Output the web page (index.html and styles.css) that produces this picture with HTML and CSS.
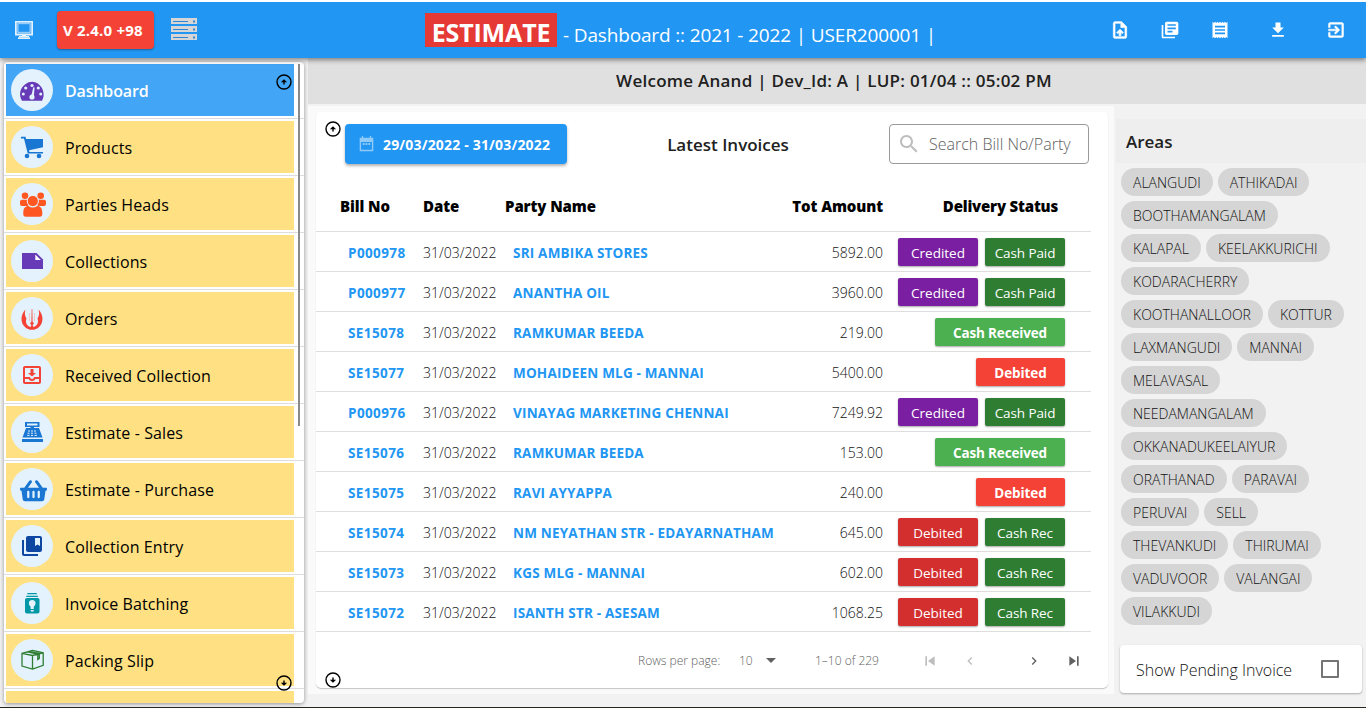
FILE: index.html
```html
<!DOCTYPE html>
<html lang="en">
<head>
<meta charset="utf-8">
<title>Estimate - Dashboard</title>
<link rel="stylesheet" href="styles.css">
</head>
<body>
<header class="topbar">
  <svg class="monitor" viewBox="0 0 18 18"><path d="M.8.8h16.400v12.800H.8z" fill="#64b5f6" stroke="#e3f2fd" stroke-width="1.600"/><path d="M3 2.700h12v8.600H3z" fill="#2196f3" stroke="#bbdefb" stroke-width=".8"/><path d="M7 13h4v2.500H7zM4 15h10v1H4zM3 16.300h12V18H3z" fill="#e3f2fd"/></svg>
  <span class="version">V 2.4.0 +98</span>
  <svg class="server" viewBox="0 0 26 22"><path d="M0 0h26v6H0zM0 8h26v6H0zM0 16h26v6H0z" fill="#d6d6d6"/><path d="M2 3.500h15M2 11.500h15M2 19.500h15" stroke="#2f86d0" stroke-width="1"/><path d="M22 2.500h2v2h-2zM22 10.500h2v2h-2zM22 18.500h2v2h-2z" fill="#2f86d0"/></svg>
  <h1 class="title"><span class="brand">ESTIMATE</span><span class="subtitle">- Dashboard :: 2021 - 2022 | USER200001 |</span></h1>
  <nav class="actions">
    <svg viewBox="0 0 24 24"><path d="M14 2H6c-1.100 0-1.990.9-1.990 2L4 20c0 1.100.89 2 1.990 2H18c1.100 0 2-.9 2-2V8l-6-6zm4 18H6V4h7v5h5v11zM8 15.010l1.410 1.410L11 14.840V19h2v-4.160l1.590 1.590L16 15.010 12.010 11z" stroke="#fff" stroke-width=".8"/></svg>
    <svg viewBox="0 0 24 24"><path d="M4 6H2v14c0 1.100.9 2 2 2h14v-2H4V6zm16-4H8c-1.100 0-2 .9-2 2v12c0 1.100.9 2 2 2h12c1.100 0 2-.9 2-2V4c0-1.100-.9-2-2-2zm-1 9H9V9h10v2zm-4 4H9v-2h6v2zm4-8H9V5h10v2z"/></svg>
    <svg viewBox="0 0 24 24"><path d="M18 17H6v-2h12v2zm0-4H6v-2h12v2zm0-4H6V7h12v2zM3 22l1.500-1.500L6 22l1.500-1.500L9 22l1.500-1.500L12 22l1.500-1.500L15 22l1.500-1.500L18 22l1.500-1.500L21 22V2l-1.500 1.500L18 2l-1.500 1.500L15 2l-1.500 1.500L12 2l-1.500 1.500L9 2 7.500 3.500 6 2 4.500 3.500 3 2v20z"/></svg>
    <svg class="spread" viewBox="0 0 24 24"><path d="M19 9h-4V3H9v6H5l7 7 7-7zM5 18v2h14v-2H5z"/></svg>
    <svg class="spread" viewBox="0 0 24 24"><path d="M10.090 15.590L11.500 17l5-5-5-5-1.410 1.410L12.670 11H3v2h9.670l-2.580 2.590zM19 3H5c-1.110 0-2 .9-2 2v4h2V5h14v14H5v-4H3v4c0 1.100.89 2 2 2h14c1.100 0 2-.9 2-2V5c0-1.100-.9-2-2-2z" stroke="#fff" stroke-width=".6"/></svg>
  </nav>
</header>

<div class="layout">
  <aside class="sidebar">
    <ul class="menu">
      <li class="item active"><a><svg class="ico" viewBox="0 0 42 42"><path d="M11 31.700C7.500 26 9 19 14 15.400s10-3.200 14 0S34.500 26 31 31.700z" fill="#673ab7"/><g fill="#e3f2fd"><circle cx="12.300" cy="25" r="1.500"/><circle cx="14.700" cy="19" r="1.600"/><circle cx="21" cy="16.500" r="1.600"/><circle cx="27.300" cy="19" r="1.600"/><circle cx="29.700" cy="25" r="1.500"/><circle cx="21" cy="28" r="2.600"/><path d="M22.300 18.300l1.300.3-.8 9.400-2.600-.8z"/></g></svg><span>Dashboard</span></a></li>
      <li class="item"><a><svg class="ico" viewBox="0 0 42 42"><g fill="#1976d2"><path d="M10 10.700h4.500l.6 2.300H32v8.300l-14 3 .4 1.700H32v1.600H16.700L13 12.500h-3z"/><circle cx="16" cy="30" r="2.300"/><circle cx="28" cy="30" r="2.300"/></g></svg><span>Products</span></a></li>
      <li class="item"><a><svg class="ico" viewBox="0 0 42 42"><g fill="#ff5722"><circle cx="14" cy="12.700" r="3.300"/><circle cx="29.700" cy="12.700" r="3.300"/><rect x="9" y="16.700" width="9" height="6.300" rx="2"/><rect x="26" y="16.700" width="9" height="6.300" rx="2"/><circle cx="21.800" cy="18" r="5.600" stroke="#e3f2fd"/><path d="M12.300 30c0-5 2-7 5-7 3 2 6 2 9 0 3 0 5 2 5 7v1.200c0 1.600-.8 2.500-2.500 2.500H14.800c-1.700 0-2.500-.9-2.500-2.500z"/></g></svg><span>Parties Heads</span></a></li>
      <li class="item"><a><svg class="ico" viewBox="0 0 42 42"><path d="M11 13h14.500l6.500 6.500V29H11z" fill="#673ab7"/><path d="M24.300 14.500l5.500 5.500h-5.500z" fill="#fff"/></svg><span>Collections</span></a></li>
      <li class="item"><a><svg class="ico" viewBox="0 0 42 42"><path d="M14.500 12.500c-5 5-5.300 13-.8 17.200 4 4.200 10.600 4.200 14.600 0 4.500-4.200 4.200-12.200-.8-17.200 1.200 4 .6 6.500-1 9 1.500 4-.4 7.500-4 8.400l-.9-1.600 1.400-2.200-1.400-1-.3-13h-.6l-.3 13-1.400 1 1.400 2.200-.9 1.600c-3.600-.9-5.500-4.400-4-8.400-1.600-2.500-2.200-5-1-9z" fill="#f44336"/><path d="M18.500 16v8M23.500 16v8" stroke="#f6a9a5" stroke-width=".6"/></svg><span>Orders</span></a></li>
      <li class="item"><a><svg class="ico" viewBox="-9 -9 42 42"><path d="M19 3H5c-1.100 0-2 .9-2 2v14c0 1.100.9 2 2 2h14c1.100 0 2-.9 2-2V5c0-1.100-.9-2-2-2zm0 16H5v-3h3.560c.69 1.190 1.970 2 3.450 2s2.750-.81 3.450-2H19v3zm0-5h-4.990c0 1.100-.9 2-2 2s-2-.9-2-2H5V5h14v9zm-3-4h-2.500V6h-3v4H8l4 3.500z" fill="#f44336"/></svg><span>Received Collection</span></a></li>
      <li class="item"><a><svg class="ico" viewBox="0 0 42 42"><path d="M14 11h14.500v5H23v1h5l3.500 9.500h-20L15 17h4.500v-1H14zm2 1.600v1.800h10.500v-1.800zM11 28h21v3H11z" fill="#1976d2" fill-rule="evenodd"/><path d="M17 20h2m1 0h2m1 0h2M16.500 22.200h2m1.500 0h2m1.500 0h2M16.200 24.400h2.300m1.500 0h2m1.500 0h2.300" stroke="#e3f2fd" stroke-width="1"/></svg><span>Estimate - Sales</span></a></li>
      <li class="item"><a><svg class="ico" viewBox="0 0 42 42"><path transform="translate(9 10.700) scale(.0469)" d="M576 216v16c0 13.255-10.745 24-24 24h-8l-26.113 182.788C514.509 462.435 494.257 480 470.370 480H105.630c-23.887 0-44.139-17.565-47.518-41.212L32 256h-8c-13.255 0-24-10.745-24-24v-16c0-13.255 10.745-24 24-24h67.341l106.780-146.821c10.395-14.292 30.407-17.453 44.701-7.058 14.293 10.395 17.453 30.408 7.058 44.701L170.477 192h235.046L326.120 82.821c-10.395-14.292-7.234-34.306 7.059-44.701 14.291-10.395 34.306-7.235 44.701 7.058L484.659 192H552c13.255 0 24 10.745 24 24zM312 392V280c0-13.255-10.745-24-24-24s-24 10.745-24 24v112c0 13.255 10.745 24 24 24s24-10.745 24-24zm112 0V280c0-13.255-10.745-24-24-24s-24 10.745-24 24v112c0 13.255 10.745 24 24 24s24-10.745 24-24zm-224 0V280c0-13.255-10.745-24-24-24s-24 10.745-24 24v112c0 13.255 10.745 24 24 24s24-10.745 24-24z" fill="#1976d2"/></svg><span>Estimate - Purchase</span></a></li>
      <li class="item"><a><svg class="ico" viewBox="-9 -9 42 42"><path d="M4 6H2v14c0 1.100.9 2 2 2h14v-2H4V6zm16-4H8c-1.100 0-2 .9-2 2v12c0 1.100.9 2 2 2h12c1.100 0 2-.9 2-2V4c0-1.100-.9-2-2-2zm0 10l-2.500-1.500L15 12V4h5v8z" fill="#0d47a1"/></svg><span>Collection Entry</span></a></li>
      <li class="item"><a><svg class="ico" viewBox="0 0 42 42"><path d="M16.300 11h9.500v1.200h-9.500zM15.300 13.700h11.500v1.200H15.300zM16 16h10.500c1.200 0 2 .8 2 2v11.500c0 1.200-.8 2-2 2H16c-1.200 0-2-.8-2-2V18c0-1.200.8-2 2-2z" fill="#0097a7"/><path d="M21.200 18c4 0 4.300 4.500 1.600 6.800V27h-3.200v-2.200C17 22.500 17.200 18 21.200 18zM19.700 28h3v1.500h-3z" fill="#e3f2fd"/></svg><span>Invoice Batching</span></a></li>
      <li class="item"><a><svg class="ico" viewBox="0 0 42 42"><path d="M11 14.300l10.500-3 10.700 2.500v12.500l-10.700 3.800L11 27zM11 14.300l10.500 2.200 10.700-2.700M21.500 16.500v13.600M16.500 12.800l10.300 2.400v5.300l1.500-1v-4.900L18.200 12.400" fill="none" stroke="#2e7d32" stroke-width="1.300"/></svg><span>Packing Slip</span></a></li>
      <li class="item"><a></a></li>
    </ul>
    <span class="thumb"></span>
    <svg class="hint hint-up" viewBox="0 0 16 16"><circle cx="8" cy="8" r="7"/><path d="M8 10.500V6M6.600 7.600L8 6.200l1.400 1.400z"/></svg>
    <svg class="hint hint-down" viewBox="0 0 16 16"><circle cx="8" cy="8" r="7"/><path d="M8 5.500V10M6.600 8.400L8 9.800l1.400-1.400z"/></svg>
  </aside>

  <div class="content">
    <div class="welcome">Welcome Anand | Dev_Id: A | LUP: 01/04 :: 05:02 PM</div>
    <div class="columns">
      <main class="main">
        <section class="card">
          <svg class="hint card-up" viewBox="0 0 16 16"><circle cx="8" cy="8" r="7"/><path d="M8 10.500V6M6.600 7.600L8 6.200l1.400 1.400z"/></svg>
          <svg class="hint card-down" viewBox="0 0 16 16"><circle cx="8" cy="8" r="7"/><path d="M8 5.500V10M6.600 8.400L8 9.800l1.400-1.400z"/></svg>
          <div class="toolbar">
            <button class="range"><svg viewBox="0 0 16 17"><path d="M1.500 2.500h13v13h-13zM1 5.500h14" fill="none" stroke="#90caf9" stroke-width="1.500"/><path d="M1 2h14v4H1zM3 0h1.500v3H3zM11.500 0H13v3h-1.500zM4 7.500h2v2H4zM7 7.500h2v2H7zM10 7.500h2v2h-2z" fill="#90caf9"/></svg>29/03/2022 - 31/03/2022</button>
            <h2 class="heading">Latest Invoices</h2>
            <label class="search"><svg viewBox="0 0 24 24"><path d="M15.500 14h-.79l-.28-.27C15.410 12.590 16 11.110 16 9.500 16 5.910 13.090 3 9.500 3S3 5.910 3 9.500 5.910 16 9.500 16c1.610 0 3.090-.59 4.230-1.570l.27.28v.79l5 4.990L20.490 19l-4.990-5zm-6 0C7.010 14 5 11.990 5 9.500S7.010 5 9.500 5 14 7.010 14 9.500 11.990 14 9.500 14z"/></svg><span>Search Bill No/Party</span></label>
          </div>
          <div class="table">
            <div class="row head"><b>Bill No</b><b>Date</b><b>Party Name</b><b class="num">Tot Amount</b><b class="status">Delivery Status</b></div>
            <div class="row"><a class="bill">P000978</a><span class="date">31/03/2022</span><a class="party">SRI AMBIKA STORES</a><span class="num">5892.00</span><span class="status"><i class="tag purple">Credited</i><i class="tag green">Cash Paid</i></span></div>
            <div class="row"><a class="bill">P000977</a><span class="date">31/03/2022</span><a class="party">ANANTHA OIL</a><span class="num">3960.00</span><span class="status"><i class="tag purple">Credited</i><i class="tag green">Cash Paid</i></span></div>
            <div class="row"><a class="bill">SE15078</a><span class="date">31/03/2022</span><a class="party">RAMKUMAR BEEDA</a><span class="num">219.00</span><span class="status"><i class="tag received">Cash Received</i></span></div>
            <div class="row"><a class="bill">SE15077</a><span class="date">31/03/2022</span><a class="party">MOHAIDEEN MLG - MANNAI</a><span class="num">5400.00</span><span class="status"><i class="tag debited">Debited</i></span></div>
            <div class="row"><a class="bill">P000976</a><span class="date">31/03/2022</span><a class="party">VINAYAG MARKETING CHENNAI</a><span class="num">7249.92</span><span class="status"><i class="tag purple">Credited</i><i class="tag green">Cash Paid</i></span></div>
            <div class="row"><a class="bill">SE15076</a><span class="date">31/03/2022</span><a class="party">RAMKUMAR BEEDA</a><span class="num">153.00</span><span class="status"><i class="tag received">Cash Received</i></span></div>
            <div class="row"><a class="bill">SE15075</a><span class="date">31/03/2022</span><a class="party">RAVI AYYAPPA</a><span class="num">240.00</span><span class="status"><i class="tag debited">Debited</i></span></div>
            <div class="row"><a class="bill">SE15074</a><span class="date">31/03/2022</span><a class="party">NM NEYATHAN STR - EDAYARNATHAM</a><span class="num">645.00</span><span class="status"><i class="tag red">Debited</i><i class="tag green">Cash Rec</i></span></div>
            <div class="row"><a class="bill">SE15073</a><span class="date">31/03/2022</span><a class="party">KGS MLG - MANNAI</a><span class="num">602.00</span><span class="status"><i class="tag red">Debited</i><i class="tag green">Cash Rec</i></span></div>
            <div class="row"><a class="bill">SE15072</a><span class="date">31/03/2022</span><a class="party">ISANTH STR - ASESAM</a><span class="num">1068.25</span><span class="status"><i class="tag red">Debited</i><i class="tag green">Cash Rec</i></span></div>
          </div>
          <footer class="pager">
            <span class="per-page">Rows per page:</span><span class="size">10</span>
            <svg class="caret" viewBox="0 0 10 5"><path d="M0 0h10L5 5z"/></svg>
            <span class="count">1–10 of 229</span>
            <svg class="pg off first" viewBox="0 0 24 24"><path d="M5 5h2.500v14H5zM19 5v14l-10-7z"/></svg>
            <svg class="pg off prev" viewBox="0 0 24 24"><path d="M15.410 7.410L14 6l-6 6 6 6 1.410-1.410L10.830 12z"/></svg>
            <svg class="pg next" viewBox="0 0 24 24"><path d="M10 6L8.590 7.410 13.170 12l-4.580 4.590L10 18l6-6z"/></svg>
            <svg class="pg last" viewBox="0 0 24 24"><path d="M16.500 5H19v14h-2.500zM5 5v14l10-7z"/></svg>
          </footer>
        </section>
      </main>
      <aside class="areas">
        <h2 class="areas-title">Areas</h2>
        <div class="chips"><span>ALANGUDI</span><span>ATHIKADAI</span><span>BOOTHAMANGALAM</span><span>KALAPAL</span><span>KEELAKKURICHI</span><span>KODARACHERRY</span><span>KOOTHANALLOOR</span><span>KOTTUR</span><span>LAXMANGUDI</span><span>MANNAI</span><span>MELAVASAL</span><span>NEEDAMANGALAM</span><span>OKKANADUKEELAIYUR</span><span>ORATHANAD</span><span>PARAVAI</span><span>PERUVAI</span><span>SELL</span><span>THEVANKUDI</span><span>THIRUMAI</span><span>VADUVOOR</span><span>VALANGAI</span><span>VILAKKUDI</span></div>
        <label class="pending">Show Pending Invoice<span class="box"></span></label>
      </aside>
    </div>
  </div>
</div>
</body>
</html>
```
FILE: styles.css
```css
* { box-sizing: border-box; }
body { margin: 0; width: 1366px; height: 708px; overflow: hidden; background: #f2f2f2; border-top: 2px solid #fff; border-bottom: 1px solid #26261f; font-family: "Open Sans", "Noto Sans", sans-serif; color: #212121; display: flex; flex-direction: column; }
h1, h2 { margin: 0; }
svg { display: block; flex: none; }

.topbar { position: relative; z-index: 2; height: 56px; flex: none; background: #2196f3; box-shadow: 0 2px 5px rgba(0,0,0,.45); display: flex; align-items: center; padding: 0 20px 0 15px; }
.monitor { width: 18px; height: 18px; }
.version { width: 97px; height: 38px; margin-left: 24px; padding-left: 6px; border-radius: 4px; background: #f44336; color: #fff; font-size: 15px; font-weight: 700; line-height: 39px; letter-spacing: .2px; white-space: nowrap; box-shadow: 0 1px 2px rgba(0,0,0,.35); }
.server { width: 26px; height: 22px; margin-left: 17px; margin-top: -2px; }
.title { margin-left: 228px; width: 520px; display: flex; align-items: baseline; color: #fff; white-space: nowrap; font-weight: 400; }
.brand { width: 132px; height: 34px; background: #e53935; text-align: center; font-size: 25px; font-weight: 700; line-height: 38px; letter-spacing: -.15px; }
.subtitle { margin-left: 6px; font-size: 19px; letter-spacing: -.15px; }
.actions { margin-left: auto; display: flex; gap: 30px; }
.actions svg { width: 20px; height: 20px; fill: #fff; }
.actions .spread { margin-left: 8px; }

.layout { flex: 1; min-height: 0; display: flex; }
.sidebar { position: relative; width: 300px; height: 641px; margin: 4px 4px 0; padding: 2px 0 0; background: #fff; border-radius: 4px; box-shadow: 0 1px 4px rgba(0,0,0,.4); overflow: hidden; flex: none; }
.menu { list-style: none; margin: 0; padding: 0; }
.item { height: 57px; padding-left: 2px; padding-right: 10px; background: linear-gradient(#ddd, #ddd) 0 54px / 100% 1px no-repeat; }
.item a { display: flex; align-items: center; gap: 12px; height: 52px; padding-left: 5px; background: #ffe082; color: #000; font-size: 16px; font-weight: 500; line-height: 22px; letter-spacing: .1px; white-space: nowrap; }
.item a span { padding-top: 2px; }
.item.active a { background: #42a5f5; color: #fff; font-weight: 600; letter-spacing: -.15px; }
.ico { width: 42px; height: 42px; border-radius: 50%; background: #e3f2fd; }
.thumb { position: absolute; left: 294px; top: 2px; width: 2px; height: 362px; background: #8a8a8a; }
.hint { position: absolute; width: 16px; height: 16px; fill: #000; stroke: #000; stroke-width: 1.400; }
.hint circle { fill: none; }
.hint-up { left: 272px; top: 12px; }
.hint-down { left: 272px; top: 613px; }

.content { flex: 1; min-width: 0; display: flex; flex-direction: column; }
.welcome { height: 46px; flex: none; background: #e0e0e0; text-align: center; font-size: 17px; font-weight: 650; line-height: 45px; letter-spacing: .25px; padding-right: 6px; }
.columns { flex: 1; display: flex; }
.main { width: 806px; height: 588px; margin-top: 2px; padding: 6px 6px 6px 8px; background: #fafafa; flex: none; }
.card { position: relative; height: 576px; background: #fff; border-radius: 5px; box-shadow: 0 1px 1px rgba(0,0,0,.22); padding: 12px 17px 0 0; }
.card-up { left: 9px; top: 9px; }
.card-down { left: 9px; top: 560px; }
.toolbar { display: flex; height: 40px; padding-left: 29px; padding-right: 2px; justify-content: space-between; align-items: center; }
.range { width: 222px; height: 40px; border: 0; border-radius: 4px; background: #2196f3; color: #fff; font: 700 14px "Open Sans", sans-serif; padding: 1px 0 0 14px; display: flex; align-items: center; gap: 9px; white-space: nowrap; letter-spacing: .18px; box-shadow: 0 2px 3px rgba(0,0,0,.3); }
.range svg { width: 15px; height: 16px; margin-top: -2px; }
.heading { font-size: 17px; font-weight: 650; white-space: nowrap; line-height: 41px; }
.search { width: 200px; height: 40px; border: 1px solid #999; border-radius: 4px; display: flex; align-items: center; color: #616161; font-size: 16px; font-weight: 300; white-space: nowrap; padding-left: 7px; gap: 8px; }
.search svg { width: 24px; height: 24px; fill: #bdbdbd; }

.table { margin-top: 15px; }
.row { height: 40px; border-bottom: 1px solid #dedede; display: grid; grid-template-columns: 83px 82px 250px 128px 182px; align-items: center; padding-left: 24px; font-size: 14px; white-space: nowrap; }
.head { height: 53px; padding-top: 1px; font-size: 15px; font-weight: 700; color: #000; letter-spacing: -.1px; }
.num { text-align: right; }
.bill, .party { padding: 2px 0 0 8px; color: #2196f3; font-size: 13.500px; font-weight: 700; letter-spacing: .2px; }
.bill { letter-spacing: .4px; }
.date, span.num { padding-top: 2px; font-weight: 300; color: #111; }
.status { display: flex; justify-content: flex-end; gap: 7px; }
.head .status { padding-right: 7px; letter-spacing: -.2px; }
.tag { font-style: normal; width: 80px; height: 28px; border-radius: 2px; color: #fff; text-align: center; line-height: 30px; font-size: 13.500px; box-shadow: 0 1px 2px rgba(0,0,0,.35); }
.purple { background: #7b1fa2; }
.green { background: #2e7d32; letter-spacing: -.1px; }
.red { background: #d32f2f; }
.received { background: #4caf50; width: 130px; font-weight: 700; letter-spacing: -.15px; }
.debited { background: #f44336; width: 89px; font-weight: 700; letter-spacing: -.1px; }

.pager { display: flex; align-items: center; height: 57px; padding-left: 322px; color: #616161; font-size: 12px; font-weight: 300; white-space: nowrap; }
.per-page { width: 101px; }
.size { width: 27px; }
.caret { width: 10px; height: 5px; fill: #616161; }
.count { width: 107px; margin-left: 39px; }
.pg { width: 16px; height: 16px; fill: #616161; }
.off { fill: #bdbdbd; }
.prev { margin-left: 24px; }
.next { margin-left: 48px; }
.last { margin-left: 24px; }

.areas { flex: 1; margin-top: 15px; padding-left: 2px; display: flex; flex-direction: column; }
.areas-title { height: 44px; background: #eee; font-size: 17px; font-weight: 650; line-height: 45px; padding-left: 10px; }
.chips { display: flex; flex-wrap: wrap; gap: 5px; padding: 5px 5px 0; height: 482px; align-content: flex-start; }
.chips span { height: 28px; padding: 0 12px; border-radius: 14px; background: #d5d5d5; color: #111; font-size: 14px; font-weight: 300; line-height: 30px; white-space: nowrap; }
.pending { margin-left: 4px; width: 242px; height: 48px; background: #fff; border-radius: 4px; box-shadow: 0 1px 2px rgba(0,0,0,.3); display: flex; align-items: center; justify-content: space-between; padding: 2px 23px 0 16px; font-size: 16px; font-weight: 300; color: #111; white-space: nowrap; }
.box { width: 18px; height: 18px; border: 2px solid #757575; border-radius: 1px; margin-top: -2px; }
```
